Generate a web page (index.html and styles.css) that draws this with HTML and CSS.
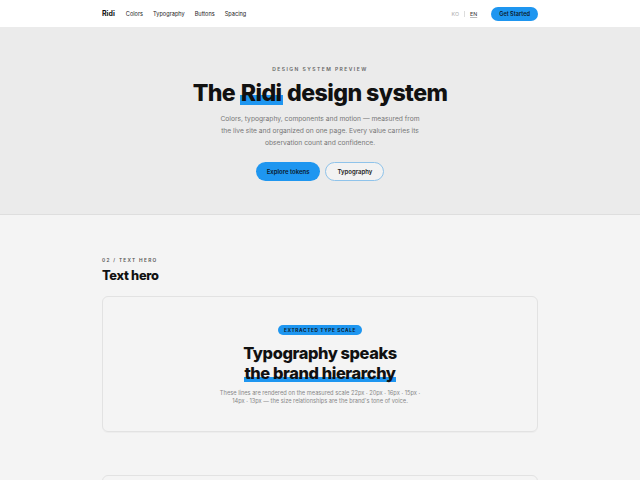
FILE: index.html
```html
<!DOCTYPE html>
<html lang="en">
<head>
<meta charset="utf-8">
<title>Ridi design system</title>
<link rel="stylesheet" href="styles.css">
</head>
<body>
<header class="topbar">
  <div class="wrap topbar-inner">
    <nav class="nav">
      <span class="brand">Ridi</span>
      <a class="nav-link">Colors</a>
      <a class="nav-link">Typography</a>
      <a class="nav-link">Buttons</a>
      <a class="nav-link">Spacing</a>
    </nav>
    <div class="actions">
      <span class="lang">KO</span>
      <span class="sep"></span>
      <span class="lang active">EN</span>
      <a class="btn-start">Get Started</a>
    </div>
  </div>
</header>
<section class="hero">
  <p class="eyebrow">DESIGN SYSTEM PREVIEW</p>
  <h1 class="hero-title">The <span class="mark">Ridi</span> design system</h1>
  <p class="hero-text">Colors, typography, components and motion — measured from the live site and organized on one page. Every value carries its observation count and confidence.</p>
  <div class="hero-buttons">
    <a class="btn btn-primary">Explore tokens</a>
    <a class="btn btn-outline">Typography</a>
  </div>
</section>
<main class="wrap content">
  <p class="section-label">02 / TEXT HERO</p>
  <h2 class="section-title">Text hero</h2>
  <div class="card">
    <span class="pill">EXTRACTED TYPE SCALE</span>
    <h3 class="card-title">Typography speaks<br><span class="underline">the brand hierarchy</span></h3>
    <p class="card-text">These lines are rendered on the measured scale 22px · 20px · 16px · 15px · 14px · 13px — the size relationships are the brand's tone of voice.</p>
  </div>
  <div class="card card-next"></div>
</main>
</body>
</html>
```
FILE: styles.css
```css
* { box-sizing: border-box; }
html, body { margin: 0; padding: 0; }
body {
  font-family: Inter, "Noto Sans", sans-serif;
  background: #f4f4f4;
  color: #111;
}
.wrap { width: 436px; margin: 0 auto; }
.topbar { background: #fff; height: 27px; }
.topbar-inner { display: flex; align-items: center; justify-content: space-between; height: 27px; }
.nav { display: flex; align-items: center; gap: 10px; }
.brand { font-weight: 700; font-size: 7px; margin-right: 1px; color: #111; }
.nav-link { font-size: 5.6px; color: #222; }
.actions { display: flex; align-items: center; }
.lang { font-size: 5.3px; color: #aaa; }
.lang.active { color: #333; text-decoration: underline; text-decoration-color: #bbb; }
.sep { width: 1px; height: 6px; background: #ddd; margin: 0 5px; }
.btn-start {
  margin-left: 14px;
  background: #1e96f0;
  color: #0b1a2b;
  font-size: 5.6px;
  font-weight: 600;
  height: 14px;
  padding: 0 8px;
  border-radius: 7px;
  display: flex;
  align-items: center;
}
.hero {
  background: #ebebeb;
  border-bottom: 1px solid #dedede;
  height: 188px;
  display: flex;
  flex-direction: column;
  align-items: center;
  padding-top: 39px;
}
.eyebrow {
  margin: 0;
  font-size: 5px;
  font-weight: 600;
  letter-spacing: 1.45px;
  color: #666;
}
.hero-title {
  margin: 7px 0 0;
  font-size: 23.2px;
  font-weight: 800;
  letter-spacing: -0.6px;
  line-height: 28px;
  color: #111;
}
.mark {
  background: linear-gradient(to bottom, transparent 56%, #1e96f0 56%, #1e96f0 93%, transparent 93%);
  padding: 0 1px;
}
.hero-text {
  margin: 6px 0 0;
  width: 202px;
  text-align: center;
  font-size: 6.7px;
  line-height: 12px;
  color: #777;
}
.hero-buttons { display: flex; gap: 5px; margin-top: 13px; }
.btn {
  height: 19px;
  border-radius: 10px;
  display: flex;
  align-items: center;
  font-size: 6px;
  font-weight: 600;
  padding: 0 11px;
}
.btn-primary { background: #1e96f0; color: #0b1a2b; }
.btn-outline { border: 1px solid #8fc3ea; color: #222; background: #f2f2f2; padding: 0 11px; }
.content { padding-top: 42px; }
.section-label {
  margin: 0;
  font-size: 4.8px;
  font-weight: 600;
  letter-spacing: 1.3px;
  color: #555;
}
.section-title {
  margin: 4px 0 0;
  font-size: 12.8px;
  font-weight: 800;
  letter-spacing: -0.3px;
  line-height: 18px;
  color: #111;
}
.card {
  margin-top: 11px;
  border: 1px solid #e2e2e2;
  border-radius: 6px;
  height: 136px;
  display: flex;
  flex-direction: column;
  align-items: center;
  padding-top: 28px;
  box-shadow: 0 1px 1px rgba(0,0,0,0.03);
}
.pill {
  background: #1e96f0;
  color: #0b1a2b;
  font-size: 4.8px;
  font-weight: 700;
  letter-spacing: 0.6px;
  padding: 0 6px;
  height: 10px;
  border-radius: 5px;
  display: flex;
  align-items: center;
}
.card-title {
  margin: 9px 0 0;
  text-align: center;
  font-size: 16.4px;
  font-weight: 800;
  letter-spacing: -0.4px;
  line-height: 19.5px;
  color: #111;
}
.underline {
  background: linear-gradient(to bottom, transparent 70%, #1e96f0 70%, #1e96f0 96%, transparent 96%);
}
.card-text {
  margin: 6px 0 0;
  width: 206px;
  text-align: center;
  font-size: 5.7px;
  line-height: 8px;
  color: #888;
}
.card-next { margin-top: 43px; height: 60px; }
```
